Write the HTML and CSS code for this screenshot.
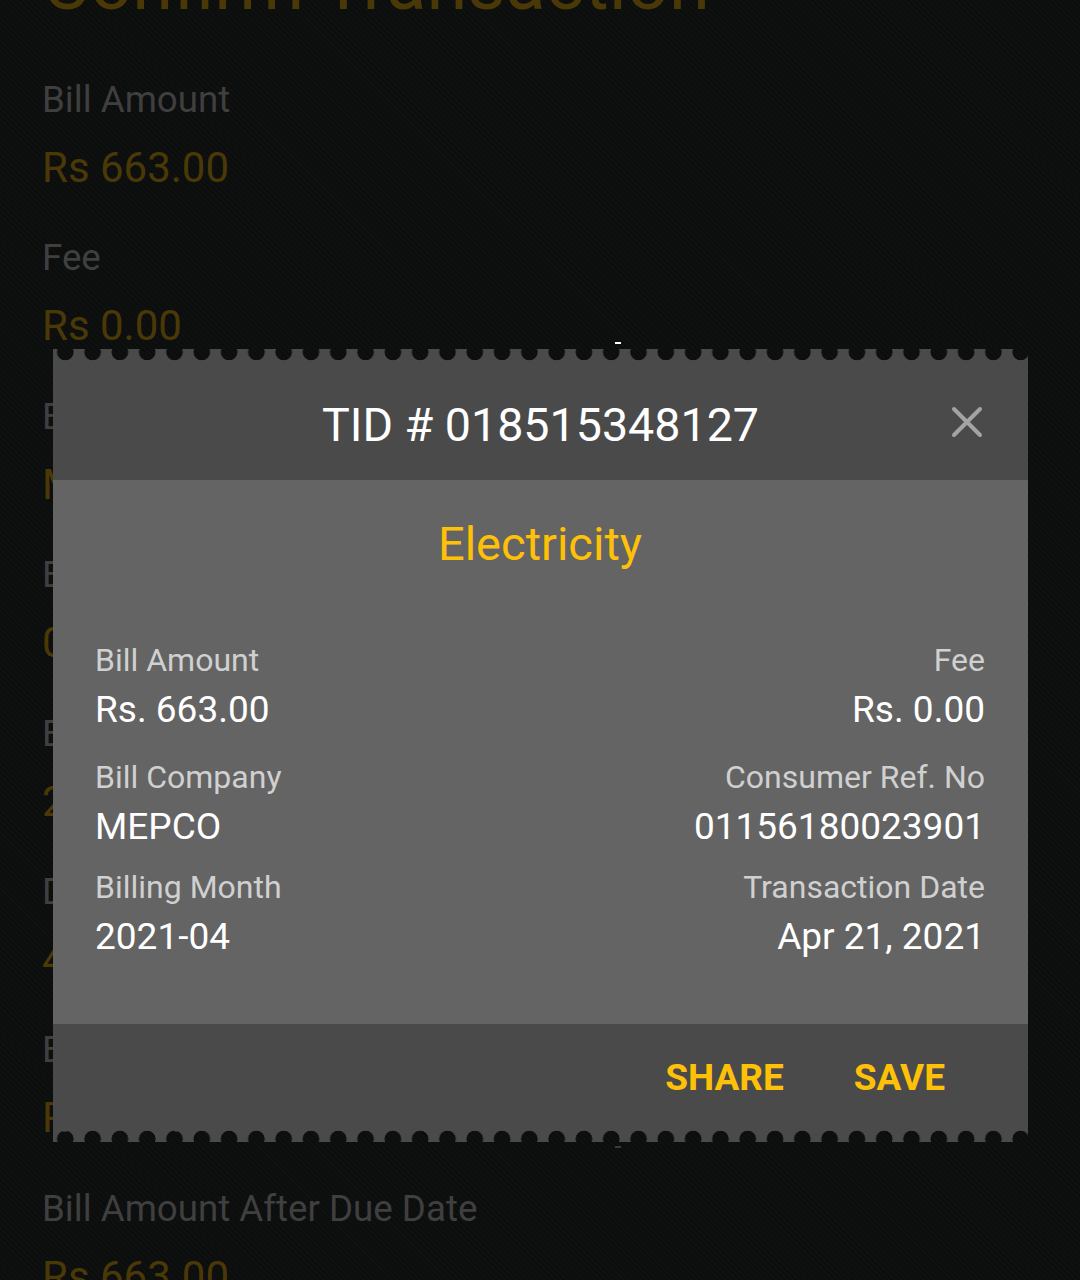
FILE: index.html
```html
<!DOCTYPE html>
<html lang="en">
<head>
<meta charset="utf-8">
<title>Confirm Transaction</title>
<link rel="stylesheet" href="styles.css">
</head>
<body>
<main class="screen">
  <h1 class="screen__title">Confirm Transaction</h1>
  <dl class="summary">
    <div class="summary__item"><dt>Bill Amount</dt><dd>Rs 663.00</dd></div>
    <div class="summary__item"><dt>Fee</dt><dd>Rs 0.00</dd></div>
    <div class="summary__item"><dt>Bill Company</dt><dd>MEPCO</dd></div>
    <div class="summary__item"><dt>Bill Reference No</dt><dd>01156180023901</dd></div>
    <div class="summary__item"><dt>Billing Month</dt><dd>2021-04</dd></div>
    <div class="summary__item"><dt>Due Date</dt><dd>4 May 2021</dd></div>
    <div class="summary__item"><dt>Bill Amount Within Due Date</dt><dd>Rs 663.00</dd></div>
    <div class="summary__item"><dt>Bill Amount After Due Date</dt><dd>Rs 663.00</dd></div>
  </dl>
</main>

<section class="receipt" role="dialog" aria-label="Transaction receipt">
  <span class="receipt__mark receipt__mark--top"></span>
  <div class="receipt__edge receipt__edge--top"></div>
  <header class="receipt__header">
    <h2 class="receipt__tid">TID # 018515348127</h2>
    <button class="receipt__close" aria-label="Close">
      <svg viewBox="0 0 32 32" width="32" height="32">
        <path d="M3 3 L29 29 M29 3 L3 29" stroke="#a4a4a4" stroke-width="4" stroke-linecap="round" fill="none"/>
      </svg>
    </button>
  </header>
  <div class="receipt__body">
    <h3 class="receipt__category">Electricity</h3>
    <div class="receipt__row">
      <div class="field"><div class="field__label">Bill Amount</div><div class="field__value">Rs. 663.00</div></div>
      <div class="field field--end"><div class="field__label">Fee</div><div class="field__value">Rs. 0.00</div></div>
    </div>
    <div class="receipt__row">
      <div class="field"><div class="field__label">Bill Company</div><div class="field__value">MEPCO</div></div>
      <div class="field field--end"><div class="field__label">Consumer Ref. No</div><div class="field__value">01156180023901</div></div>
    </div>
    <div class="receipt__row receipt__row--tight">
      <div class="field"><div class="field__label">Billing Month</div><div class="field__value">2021-04</div></div>
      <div class="field field--end"><div class="field__label">Transaction Date</div><div class="field__value">Apr 21, 2021</div></div>
    </div>
  </div>
  <footer class="receipt__footer">
    <button class="receipt__action">SHARE</button>
    <button class="receipt__action">SAVE</button>
  </footer>
  <div class="receipt__edge receipt__edge--bottom"></div>
  <span class="receipt__mark receipt__mark--bottom"></span>
</section>
</body>
</html>
```

FILE: styles.css
```css
html, body {
  margin: 0;
  padding: 0;
}

body {
  position: relative;
  width: 1080px;
  height: 1280px;
  overflow: hidden;
  background-color: #0c0d0d;
  background-image: repeating-linear-gradient(45deg, rgba(255,255,255,0.012) 0 2px, transparent 2px 4px);
  font-family: Roboto, "Noto Sans", "Liberation Sans", sans-serif;
}

/* background screen (dimmed) */
.screen {
  padding: 0 42px;
}

.screen__title {
  margin: -60px 0 0;
  font-size: 74px;
  line-height: 88px;
  font-weight: 400;
  color: #4a3906;
  white-space: nowrap;
}

.summary {
  margin: 50px 0 0;
}

.summary__item {
  margin: 0 0 42.4px;
}

.summary__item dt {
  font-size: 36.7px;
  line-height: 44px;
  color: #3f3f3f;
  white-space: nowrap;
}

.summary__item dd {
  margin: 20px 0 0;
  font-size: 42px;
  line-height: 52px;
  color: #4a3906;
}

/* receipt dialog */
.receipt {
  position: absolute;
  left: 53px;
  top: 349px;
  width: 975px;
}

.receipt__mark {
  position: absolute;
  left: 562px;
  width: 6px;
  height: 2px;
  background: #ffffff;
}

.receipt__mark--top {
  top: -7px;
}

.receipt__mark--bottom {
  bottom: -6px;
  background: #3a3a3a;
}

.receipt__edge {
  height: 12px;
  background-repeat: repeat-x;
  background-size: 27.3px 12px;
  background-position: -1.35px 0;
}

.receipt__edge--top {
  background-image: radial-gradient(circle at 50% 3px, transparent 8px, #4a4a4a 8.6px);
}

.receipt__edge--bottom {
  background-image: radial-gradient(circle at 50% 9px, transparent 8px, #4a4a4a 8.6px);
}

.receipt__header {
  position: relative;
  box-sizing: border-box;
  height: 119px;
  padding-top: 10px;
  background: #4a4a4a;
  display: flex;
  align-items: center;
  justify-content: center;
}

.receipt__tid {
  margin: 0;
  font-size: 46.6px;
  line-height: 1;
  font-weight: 400;
  color: #ffffff;
}

.receipt__close {
  position: absolute;
  top: 45px;
  right: 45px;
  width: 32px;
  height: 32px;
  padding: 0;
  border: 0;
  background: none;
}

.receipt__close svg {
  display: block;
}

.receipt__body {
  background: #646464;
  padding: 36px 43px 63px 42px;
}

.receipt__category {
  margin: 0 0 64px;
  text-align: center;
  font-size: 47px;
  line-height: 56px;
  font-weight: 400;
  color: #ffc107;
}

.receipt__row {
  display: flex;
  justify-content: space-between;
}

.receipt__row + .receipt__row {
  margin-top: 19px;
}

.receipt__row + .receipt__row--tight {
  margin-top: 12px;
}

.field--end {
  text-align: right;
}

.field__label {
  font-size: 32px;
  line-height: 48px;
  color: #d0d0d0;
  white-space: nowrap;
}

.field__value {
  margin-top: 2px;
  font-size: 37px;
  line-height: 48px;
  color: #ffffff;
  white-space: nowrap;
}

.receipt__footer {
  box-sizing: border-box;
  height: 106px;
  padding-right: 83px;
  background: #4a4a4a;
  display: flex;
  align-items: center;
  justify-content: flex-end;
  gap: 70px;
}

.receipt__action {
  padding: 0;
  border: 0;
  background: none;
  font-family: Roboto, "Noto Sans", "Liberation Sans", sans-serif;
  font-size: 37px;
  line-height: 1;
  font-weight: 700;
  color: #ffc107;
}
```
